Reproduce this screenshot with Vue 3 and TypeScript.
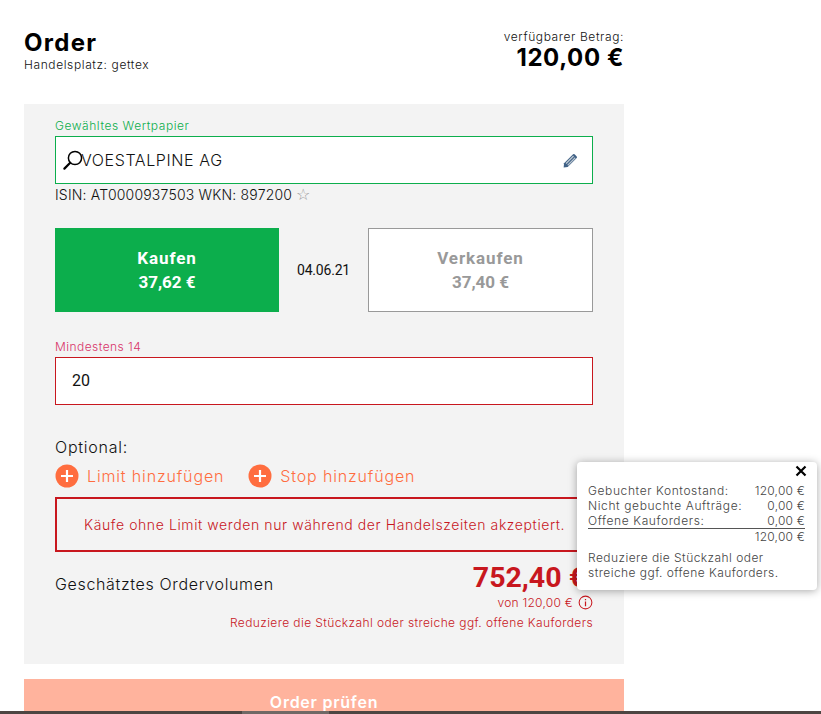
<script setup lang="ts">
const balanceRows = [
  { label: 'Gebuchter Kontostand:', value: '120,00 €' },
  { label: 'Nicht gebuchte Aufträge:', value: '0,00 €' },
  { label: 'Offene Kauforders:', value: '0,00 €' },
]
</script>

<template>
  <div class="page">
    <header class="head">
      <div>
        <h1 class="title">Order</h1>
        <div class="venue">Handelsplatz: gettex</div>
      </div>
      <div class="funds">
        <div class="funds-label">verfügbarer Betrag:</div>
        <div class="funds-value">120,00 €</div>
      </div>
    </header>

    <section class="panel">
      <label class="field-label green">Gewähltes Wertpapier</label>
      <div class="security">
        <svg class="search-icon" viewBox="0 0 20 20" width="20" height="20" fill="none" stroke="#000">
          <circle cx="12" cy="8" r="6.6" stroke-width="1.5" />
          <path d="M7.2 12.8 1.4 18.6" stroke-width="2.2" stroke-linecap="round" />
        </svg>
        <span class="security-name">VOESTALPINE AG</span>
        <svg class="pencil-icon" viewBox="0 0 14 14" width="15" height="15">
          <path d="M1 9.6 9.4 1.2a1 1 0 0 1 1.4 0l2 2a1 1 0 0 1 0 1.4L4.4 13 .6 13.6Z" fill="#3f6186" />
          <path d="M2.4 9.4 9.4 2.4l.9.9-7 7ZM4 11l7-7 .8.8-7 7Z" fill="#b9c4cf" />
        </svg>
      </div>
      <div class="isin">ISIN: AT0000937503 WKN: 897200 <span class="star">☆</span></div>

      <div class="trade">
        <div class="trade-btn buy">
          <div class="trade-name">Kaufen</div>
          <div>37,62 €</div>
        </div>
        <div class="trade-date">04.06.21</div>
        <div class="trade-btn sell">
          <div class="trade-name">Verkaufen</div>
          <div>37,40 €</div>
        </div>
      </div>

      <label class="field-label pink">Mindestens 14</label>
      <div class="qty">20</div>

      <div class="optional">Optional:</div>
      <div class="adders">
        <div class="adder">
          <svg viewBox="0 0 24 24" width="24" height="24">
            <circle cx="12" cy="12" r="11.5" fill="#ff6d3f" />
            <path d="M12 6v12M6 12h12" stroke="#fff" stroke-width="2.2" />
          </svg>
          <span>Limit hinzufügen</span>
        </div>
        <div class="adder">
          <svg viewBox="0 0 24 24" width="24" height="24">
            <circle cx="12" cy="12" r="11.5" fill="#ff6d3f" />
            <path d="M12 6v12M6 12h12" stroke="#fff" stroke-width="2.2" />
          </svg>
          <span>Stop hinzufügen</span>
        </div>
      </div>

      <div class="notice">Käufe ohne Limit werden nur während der Handelszeiten akzeptiert.</div>

      <div class="estimate">
        <div class="estimate-label">Geschätztes Ordervolumen</div>
        <div class="estimate-side">
          <div class="estimate-value">752,40 €</div>
          <div class="estimate-of">
            <span>von 120,00 €</span>
            <svg viewBox="0 0 16 16" width="15" height="15" fill="none" stroke="#c8171e">
              <circle cx="8" cy="8" r="6.8" stroke-width="1.1" />
              <path d="M8 4.2v1.3M8 7v5" stroke-width="1.3" />
            </svg>
          </div>
        </div>
      </div>
      <div class="hint">Reduziere die Stückzahl oder streiche ggf. offene Kauforders</div>
    </section>

    <button class="submit">Order prüfen</button>

    <aside class="popover">
      <svg class="close" viewBox="0 0 12 12" width="12" height="12">
        <path d="M1.5 1.5l9 9M10.5 1.5l-9 9" stroke="#000" stroke-width="2.2" />
      </svg>
      <div v-for="(row, i) in balanceRows" :key="i" class="pop-row" :class="{ last: i === balanceRows.length - 1 }">
        <span>{{ row.label }}</span>
        <span class="pop-value">{{ row.value }}</span>
      </div>
      <div class="pop-row total"><span></span><span class="pop-value">120,00 €</span></div>
      <p class="pop-text">Reduziere die Stückzahl oder streiche ggf. offene Kauforders.</p>
    </aside>

    <div class="scrollbar"><div class="scrollbar-thumb"></div></div>
  </div>
</template>

<style scoped>
.page {
  position: relative;
  box-sizing: border-box;
  width: 821px;
  height: 714px;
  overflow: hidden;
  padding: 30px 0 0 24px;
  font-family: Inter, "Open Sans", sans-serif;
  font-weight: 300;
  color: #111;
  background: #fff;
}

.head {
  display: flex;
  justify-content: space-between;
  width: 600px;
  height: 74px;
}

.title {
  margin: 0;
  font-size: 24px;
  line-height: 26px;
  font-weight: 700;
  letter-spacing: 1.3px;
  color: #000;
}

.venue {
  font-size: 12px;
  line-height: 14px;
  margin-top: 2px;
  letter-spacing: 0.6px;
}

.funds {
  text-align: right;
}

.funds-label {
  font-size: 12px;
  line-height: 14px;
  letter-spacing: 0.6px;
}

.funds-value {
  font-size: 24px;
  line-height: 28px;
  font-weight: 700;
  color: #000;
  letter-spacing: 0.6px;
}

.panel {
  box-sizing: border-box;
  width: 600px;
  height: 560px;
  padding: 14px 31px 0;
  background: #f3f3f3;
}

.field-label {
  display: block;
  font-size: 12px;
  line-height: 15px;
  letter-spacing: 0.55px;
}

.green {
  color: #0cae4c;
}

.pink {
  color: #d8336a;
}

.security {
  position: relative;
  box-sizing: border-box;
  display: flex;
  align-items: center;
  justify-content: space-between;
  height: 48px;
  margin-top: 3px;
  padding: 0 14px 0 25px;
  border: 1px solid #0cae4c;
  background: #fff;
}

.security-name {
  font-size: 16px;
  letter-spacing: 0.6px;
}

.search-icon {
  position: absolute;
  left: 7px;
  top: 13px;
}

.pencil-icon {
  flex: none;
}

.isin {
  margin-top: 2px;
  font-size: 14px;
  line-height: 18px;
  letter-spacing: 0.19px;
}

.star {
  font-family: "DejaVu Sans", sans-serif;
  font-size: 16px;
  color: #999;
}

.trade {
  display: flex;
  align-items: center;
  margin-top: 24px;
}

.trade-btn {
  box-sizing: border-box;
  flex: none;
  width: 224px;
  height: 84px;
  display: flex;
  flex-direction: column;
  justify-content: center;
  gap: 6px;
  font-family: Roboto, sans-serif;
  font-size: 17px;
  line-height: 18px;
  font-weight: 700;
  text-align: center;
}

.trade-name {
  letter-spacing: 0.9px;
}

.buy {
  background: #0cae4c;
  color: #fff;
}

.sell {
  width: 225px;
  background: #fff;
  border: 1px solid #999;
  color: #999;
}

.trade-date {
  flex: 1;
  text-align: center;
  font-family: Roboto, sans-serif;
  font-weight: 400;
  font-size: 14px;
  letter-spacing: -0.2px;
}

.trade + .field-label {
  margin-top: 27px;
  letter-spacing: 0.45px;
}

.qty {
  box-sizing: border-box;
  height: 48px;
  margin-top: 3px;
  padding-left: 16px;
  border: 1px solid #c8171e;
  background: #fff;
  font-family: Roboto, sans-serif;
  font-weight: 400;
  font-size: 16px;
  line-height: 46px;
}

.optional {
  margin-top: 32px;
  font-size: 16px;
  line-height: 20px;
  letter-spacing: 0.75px;
}

.adders {
  display: flex;
  gap: 24px;
  margin-top: 7px;
}

.adder {
  display: flex;
  align-items: center;
  gap: 8px;
  color: #ff6d3f;
  font-size: 16px;
  line-height: 24px;
  letter-spacing: 0.85px;
}

.notice {
  box-sizing: border-box;
  height: 55px;
  margin-top: 9px;
  padding-left: 27px;
  border: 2px solid #c8171e;
  color: #c8171e;
  font-size: 14px;
  line-height: 51px;
  letter-spacing: 0.6px;
  white-space: nowrap;
}

.estimate {
  display: flex;
  justify-content: space-between;
  margin-top: 9px;
}

.estimate-label {
  margin-top: 13px;
  font-size: 16px;
  line-height: 20px;
  letter-spacing: 0.65px;
}

.estimate-side {
  text-align: right;
}

.estimate-value {
  margin-right: 8px;
  font-family: Roboto, sans-serif;
  font-size: 28.5px;
  line-height: 34px;
  font-weight: 700;
  color: #c8171e;
  white-space: nowrap;
}

.estimate-of {
  display: flex;
  justify-content: flex-end;
  align-items: center;
  gap: 5px;
  font-size: 12px;
  line-height: 15px;
  letter-spacing: 0.25px;
  color: #c8171e;
}

.hint {
  margin-top: 5px;
  text-align: right;
  color: #c8171e;
  font-size: 12px;
  line-height: 16px;
  letter-spacing: 0.4px;
}

.submit {
  display: block;
  width: 600px;
  height: 46px;
  margin-top: 15px;
  padding: 0;
  border: 0;
  background: #ffb39d;
  color: #fff;
  font-family: inherit;
  font-size: 16px;
  line-height: 46px;
  font-weight: 600;
  letter-spacing: 0.75px;
}

.popover {
  position: absolute;
  left: 577px;
  top: 462px;
  box-sizing: border-box;
  width: 240px;
  height: 128px;
  padding: 21px 12px 0 11px;
  background: #fff;
  border-radius: 4px;
  box-shadow: 0 1px 8px rgba(0, 0, 0, 0.35);
  font-size: 12px;
  line-height: 15px;
  color: #444;
  letter-spacing: 0.6px;
}

.close {
  position: absolute;
  right: 10px;
  top: 3px;
}

.pop-row {
  display: flex;
  justify-content: space-between;
}

.pop-value {
  letter-spacing: 0.2px;
}

.pop-row.last {
  border-bottom: 1px solid #555;
}

.pop-text {
  margin: 6px 0 0;
  letter-spacing: 0.45px;
}

.scrollbar {
  position: fixed;
  left: 0;
  right: 0;
  bottom: 0;
  height: 3px;
  background: #4d4542;
}

.scrollbar-thumb {
  width: 87px;
  height: 3px;
  margin-left: 242px;
  background: #6f6865;
}
</style>

<style>
html,
body {
  margin: 0;
  overflow: hidden;
}
</style>
